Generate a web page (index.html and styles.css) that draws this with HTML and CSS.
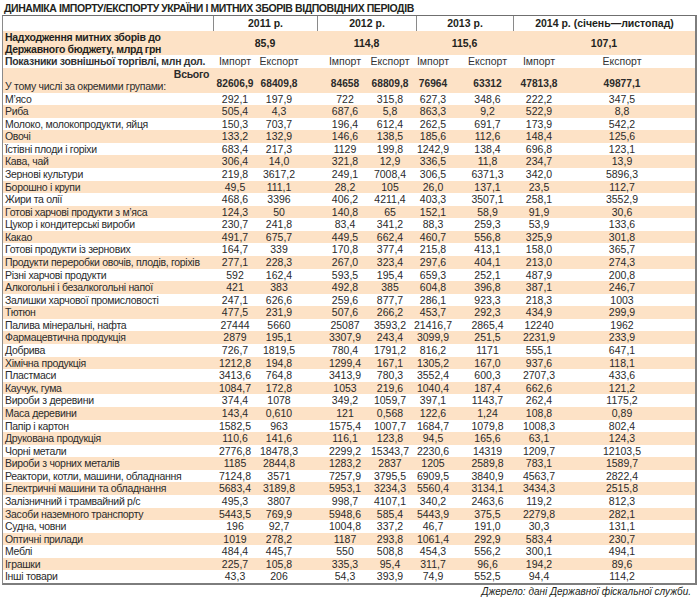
FILE: index.html
```html
<!DOCTYPE html>
<html lang="uk">
<head>
<meta charset="utf-8">
<title>Динаміка імпорту/експорту</title>
<link rel="stylesheet" href="styles.css">
</head>
<body>
<div class="title">ДИНАМІКА ІМПОРТУ/ЕКСПОРТУ УКРАЇНИ І МИТНИХ ЗБОРІВ ВІДПОВІДНИХ ПЕРІОДІВ</div>
<div class="tbl">
  <div class="years">
    <div class="lbl"></div>
    <div class="yr">2011 р.</div>
    <div class="yr">2012 р.</div>
    <div class="yr">2013 р.</div>
    <div class="yr">2014 р. (січень—листопад)</div>
  </div>
  <div class="fees">
    <div class="lbl b">Надходження митних зборів до<br>Державного бюджету, млрд грн</div>
    <div class="fv">85,9</div>
    <div class="fv">114,8</div>
    <div class="fv">115,6</div>
    <div class="fv">107,1</div>
  </div>
  <div class="row sub">
    <div class="lbl b">Показники зовнішньої торгівлі, млн дол.</div>
    <div>Імпорт</div><div>Експорт</div><div>Імпорт</div><div>Експорт</div><div>Імпорт</div><div>Експорт</div><div>Імпорт</div><div>Експорт</div>
  </div>
  <div class="row total">
    <div class="lbl"><span class="all">Всього</span><span>У тому числі за окремими групами:</span></div>
    <div>82606,9</div><div>68409,8</div><div>84658</div><div>68809,8</div><div>76964</div><div>63312</div><div>47813,8</div><div>49877,1</div>
  </div>
  <div class="row"><div class="lbl">М’ясо</div><div>292,1</div><div>197,9</div><div>722</div><div>315,8</div><div>627,3</div><div>348,6</div><div>222,2</div><div>347,5</div></div>
  <div class="row alt"><div class="lbl">Риба</div><div>505,4</div><div>4,3</div><div>687,6</div><div>5,8</div><div>863,3</div><div>9,2</div><div>522,9</div><div>8,8</div></div>
  <div class="row"><div class="lbl">Молоко, молокопродукти, яйця</div><div>150,3</div><div>703,7</div><div>196,4</div><div>612,4</div><div>262,5</div><div>691,7</div><div>173,9</div><div>542,2</div></div>
  <div class="row alt"><div class="lbl">Овочі</div><div>133,2</div><div>132,9</div><div>146,6</div><div>138,5</div><div>185,6</div><div>112,6</div><div>148,4</div><div>125,6</div></div>
  <div class="row"><div class="lbl">Їстівні плоди і горіхи</div><div>683,4</div><div>217,3</div><div>1129</div><div>199,8</div><div>1242,9</div><div>138,4</div><div>696,8</div><div>123,1</div></div>
  <div class="row alt"><div class="lbl">Кава, чай</div><div>306,4</div><div>14,0</div><div>321,8</div><div>12,9</div><div>336,5</div><div>11,8</div><div>234,7</div><div>13,9</div></div>
  <div class="row"><div class="lbl">Зернові культури</div><div>219,8</div><div>3617,2</div><div>249,1</div><div>7008,4</div><div>306,5</div><div>6371,3</div><div>342,0</div><div>5896,3</div></div>
  <div class="row alt"><div class="lbl">Борошно і крупи</div><div>49,5</div><div>111,1</div><div>28,2</div><div>105</div><div>26,0</div><div>137,1</div><div>23,5</div><div>112,7</div></div>
  <div class="row"><div class="lbl">Жири та олії</div><div>468,6</div><div>3396</div><div>406,2</div><div>4211,4</div><div>403,3</div><div>3507,1</div><div>258,1</div><div>3552,9</div></div>
  <div class="row alt"><div class="lbl">Готові харчові продукти з м’яса</div><div>124,3</div><div>50</div><div>140,8</div><div>65</div><div>152,1</div><div>58,9</div><div>91,9</div><div>30,6</div></div>
  <div class="row"><div class="lbl">Цукор і кондитерські вироби</div><div>230,7</div><div>241,8</div><div>83,4</div><div>341,2</div><div>88,3</div><div>259,3</div><div>53,9</div><div>133,6</div></div>
  <div class="row alt"><div class="lbl">Какао</div><div>491,7</div><div>675,7</div><div>449,5</div><div>662,4</div><div>460,7</div><div>556,8</div><div>325,9</div><div>301,8</div></div>
  <div class="row"><div class="lbl">Готові продукти із зернових</div><div>164,7</div><div>339</div><div>170,8</div><div>377,4</div><div>215,8</div><div>413,1</div><div>158,0</div><div>365,7</div></div>
  <div class="row alt"><div class="lbl">Продукти переробки овочів, плодів, горіхів</div><div>277,1</div><div>228,3</div><div>267,0</div><div>323,4</div><div>297,6</div><div>404,1</div><div>213,0</div><div>274,3</div></div>
  <div class="row"><div class="lbl">Різні харчові продукти</div><div>592</div><div>162,4</div><div>593,5</div><div>195,4</div><div>659,3</div><div>252,1</div><div>487,9</div><div>200,8</div></div>
  <div class="row alt"><div class="lbl">Алкогольні і безалкогольні напої</div><div>421</div><div>383</div><div>492,8</div><div>385</div><div>604,8</div><div>396,8</div><div>387,1</div><div>246,7</div></div>
  <div class="row"><div class="lbl">Залишки харчової промисловості</div><div>247,1</div><div>626,6</div><div>259,6</div><div>877,7</div><div>286,1</div><div>923,3</div><div>218,3</div><div>1003</div></div>
  <div class="row alt"><div class="lbl">Тютюн</div><div>477,5</div><div>231,9</div><div>507,6</div><div>266,2</div><div>453,7</div><div>292,3</div><div>434,9</div><div>299,9</div></div>
  <div class="row"><div class="lbl">Палива мінеральні, нафта</div><div>27444</div><div>5660</div><div>25087</div><div>3593,2</div><div>21416,7</div><div>2865,4</div><div>12240</div><div>1962</div></div>
  <div class="row alt"><div class="lbl">Фармацевтична продукція</div><div>2879</div><div>195,1</div><div>3307,9</div><div>243,4</div><div>3099,9</div><div>251,5</div><div>2231,9</div><div>233,9</div></div>
  <div class="row"><div class="lbl">Добрива</div><div>726,7</div><div>1819,5</div><div>780,4</div><div>1791,2</div><div>816,2</div><div>1171</div><div>555,1</div><div>647,1</div></div>
  <div class="row alt"><div class="lbl">Хімічна продукція</div><div>1212,8</div><div>194,8</div><div>1299,4</div><div>167,1</div><div>1305,2</div><div>167,0</div><div>937,6</div><div>118,1</div></div>
  <div class="row"><div class="lbl">Пластмаси</div><div>3413,6</div><div>764,8</div><div>3413,9</div><div>780,3</div><div>3552,4</div><div>600,3</div><div>2707,3</div><div>433,6</div></div>
  <div class="row alt"><div class="lbl">Каучук, гума</div><div>1084,7</div><div>172,8</div><div>1053</div><div>219,6</div><div>1040,4</div><div>187,4</div><div>662,6</div><div>121,2</div></div>
  <div class="row"><div class="lbl">Вироби з деревини</div><div>374,4</div><div>1078</div><div>349,2</div><div>1059,7</div><div>397,1</div><div>1143,7</div><div>262,4</div><div>1175,2</div></div>
  <div class="row alt"><div class="lbl">Маса деревини</div><div>143,4</div><div>0,610</div><div>121</div><div>0,568</div><div>122,6</div><div>1,24</div><div>108,8</div><div>0,89</div></div>
  <div class="row"><div class="lbl">Папір і картон</div><div>1582,5</div><div>963</div><div>1575,4</div><div>1007,7</div><div>1684,7</div><div>1079,8</div><div>1008,3</div><div>802,4</div></div>
  <div class="row alt"><div class="lbl">Друкована продукція</div><div>110,6</div><div>141,6</div><div>116,1</div><div>123,8</div><div>94,5</div><div>165,6</div><div>63,1</div><div>124,3</div></div>
  <div class="row"><div class="lbl">Чорні метали</div><div>2776,8</div><div>18478,3</div><div>2299,2</div><div>15343,7</div><div>2230,6</div><div>14319</div><div>1209,7</div><div>12103,5</div></div>
  <div class="row alt"><div class="lbl">Вироби з чорних металів</div><div>1185</div><div>2844,8</div><div>1283,2</div><div>2837</div><div>1205</div><div>2589,8</div><div>783,1</div><div>1589,7</div></div>
  <div class="row"><div class="lbl">Реактори, котли, машини, обладнання</div><div>7124,8</div><div>3571</div><div>7257,9</div><div>3795,5</div><div>6909,5</div><div>3840,9</div><div>4563,7</div><div>2822,4</div></div>
  <div class="row alt"><div class="lbl">Електричні машини та обладнання</div><div>5683,4</div><div>3189,8</div><div>5953,1</div><div>3234,3</div><div>5560,4</div><div>3134,1</div><div>3434,3</div><div>2515,8</div></div>
  <div class="row"><div class="lbl">Залізничний і трамвайний р/с</div><div>495,3</div><div>3807</div><div>998,7</div><div>4107,1</div><div>340,2</div><div>2463,6</div><div>119,2</div><div>812,3</div></div>
  <div class="row alt"><div class="lbl">Засоби наземного транспорту</div><div>5443,5</div><div>769,9</div><div>5948,6</div><div>585,4</div><div>5443,9</div><div>375,5</div><div>2279,8</div><div>282,1</div></div>
  <div class="row"><div class="lbl">Судна, човни</div><div>196</div><div>92,7</div><div>1004,8</div><div>337,2</div><div>46,7</div><div>191,0</div><div>30,3</div><div>131,1</div></div>
  <div class="row alt"><div class="lbl">Оптичні прилади</div><div>1019</div><div>278,2</div><div>1187</div><div>293,8</div><div>1061,4</div><div>292,9</div><div>583,4</div><div>230,7</div></div>
  <div class="row"><div class="lbl">Меблі</div><div>484,4</div><div>445,7</div><div>550</div><div>508,8</div><div>454,3</div><div>556,2</div><div>300,1</div><div>494,1</div></div>
  <div class="row alt"><div class="lbl">Іграшки</div><div>225,7</div><div>105,8</div><div>335,3</div><div>95,4</div><div>311,7</div><div>96,6</div><div>194,2</div><div>89,6</div></div>
  <div class="row"><div class="lbl">Інші товари</div><div>43,3</div><div>206</div><div>54,3</div><div>393,9</div><div>74,9</div><div>552,5</div><div>94,4</div><div>114,2</div></div>
</div>
<div class="source">Джерело: дані Державної фіскальної служби.</div>
</body>
</html>
```

FILE: styles.css
```css
html, body {
  margin: 0;
  padding: 0;
  background: #ffffff;
}
body {
  width: 700px;
  font-family: "Liberation Sans", Arial, sans-serif;
  color: #231f20;
}
.title {
  font-size: 10.5px;
  font-weight: bold;
  line-height: 12px;
  height: 13px;
  padding: 2px 0 0 4px;
  letter-spacing: -0.42px;
  white-space: nowrap;
}
.tbl {
  margin-left: 2px;
  width: 692px;
  border-top: 1px solid #6f6f6f;
  border-left: 1px solid #8a8a8a;
  border-right: 2px solid #7d7d7d;
  border-bottom: 2px solid #7d7d7d;
}
.years,
.fees {
  display: grid;
  grid-template-columns: 210px 104px 99px 97px 182px;
}
.years {
  height: 15px;
  font-size: 10.5px;
  font-weight: bold;
  line-height: 15px;
}
.yr {
  text-align: center;
  border-left: 1px solid #8a8a8a;
}
.fees {
  height: 24px;
  background: #fde2c6;
  font-size: 10.5px;
  line-height: 11.5px;
}
.fees .lbl {
  padding-top: 1px;
}
.fv {
  font-weight: bold;
  text-align: center;
  align-self: center;
  padding-top: 1px;
}
.b {
  font-weight: bold;
}
.row {
  display: grid;
  grid-template-columns: 210px 44px 55px 56px 44px 49px 53px 66px 115px;
  height: 12.58px;
  font-size: 10.5px;
  line-height: 12.58px;
  white-space: nowrap;
}
.row > div {
  text-align: center;
  color: #2b2b2b;
}
.row > .lbl {
  text-align: left;
}
.lbl {
  padding-left: 2px;
  letter-spacing: -0.3px;
}
.row > div:nth-child(3) { padding-right: 11px; }
.row > div:nth-child(4) { padding-left: 10px; }
.row > div:nth-child(6) { padding-right: 7px; }
.row > div:nth-child(8) { padding-right: 16px; }
.row > div:nth-child(9) { padding-right: 31px; }
.alt {
  background: #fde2c6;
}
.sub {
  height: 12.5px;
}
.sub > div {
  color: #333333;
}
.total {
  height: 25px;
  background: #fde2c6;
  font-weight: bold;
  font-size: 10.2px;
}
.total > div {
  line-height: 25px;
  padding-top: 3px;
}
.total > .lbl {
  display: flex;
  flex-direction: column;
  line-height: 12px;
  padding-top: 0;
  font-size: 10.5px;
}
.total .all {
  align-self: flex-end;
  padding-right: 4px;
}
.total .lbl span:last-child {
  font-weight: normal;
}
.source {
  font-size: 10px;
  font-style: italic;
  text-align: right;
  padding: 1px 9px 0 0;
  line-height: 11px;
}
```
